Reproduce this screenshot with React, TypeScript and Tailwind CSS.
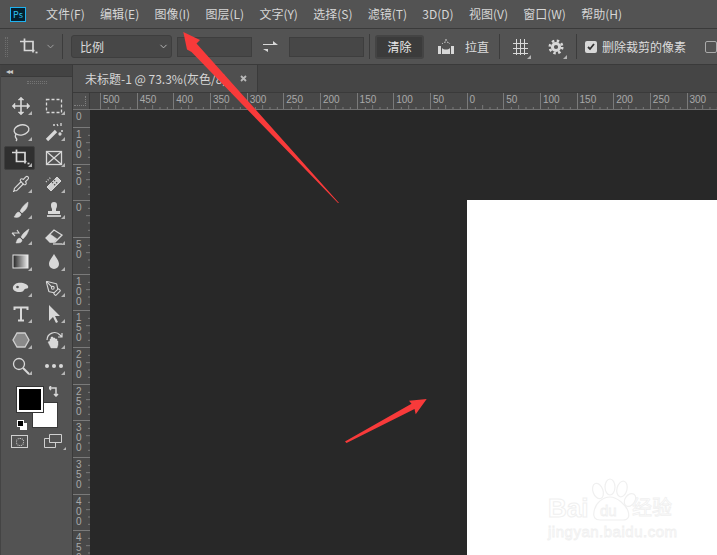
import { ReactNode } from "react";
import { ChevronDown, Pipette, PenTool } from "lucide-react";

const menus = ["文件(F)", "编辑(E)", "图像(I)", "图层(L)", "文字(Y)", "选择(S)", "滤镜(T)", "3D(D)", "视图(V)", "窗口(W)", "帮助(H)"];
const topLabels = [500, 450, 400, 350, 300, 250, 200, 150, 100, 50, 0, 50, 100, 150, 200, 250, 300];
const leftLabels = [100, 50, 0, 50, 100, 150, 200, 250, 300, 350, 400, 450];
const minor = [1, 2, 3, 4];

const Ic = ({ children }: { children: ReactNode }) => (
  <svg className="relative" width="20" height="20" viewBox="0 0 20 20" fill="none" stroke="#d8d8d8" strokeWidth="1.3">
    {children}
  </svg>
);

const CropIcon = () => (
  <Ic>
    <path d="M1 4.5h3M5.5 1.5v12h10M4 4.5h10v11" strokeWidth="1.7" />
    <path d="M16.5 15.5h2" strokeWidth="1.7" />
  </Ic>
);

const tools: { icon: ReactNode; active?: boolean }[] = [
  { icon: <Ic><path d="M10 3v14M3 10h14" strokeWidth="1.6" /><path d="M10 1l3 3H7zM10 19l3-3H7zM1 10l3 3V7zM19 10l-3 3V7z" fill="#d8d8d8" strokeWidth="0.4" /></Ic> },
  { icon: <Ic><rect x="2.5" y="3.5" width="15" height="13" strokeDasharray="3 2" /></Ic> },
  { icon: <Ic><ellipse cx="10.5" cy="8" rx="7.5" ry="5" transform="rotate(-12 10 8)" /><path d="M5 12c-1 2-1 3 0 4s1 2 0 3" /></Ic> },
  { icon: <Ic><path d="M3 18L12 9" strokeWidth="3.2" /><path d="M13 2l1 2M17 1v3M19 9h-2M9 3h2" strokeWidth="1.3" /><circle cx="16" cy="12" r="1" fill="#d8d8d8" /></Ic> },
  { icon: <CropIcon />, active: true },
  { icon: <Ic><rect x="2.5" y="3.5" width="15" height="13" /><path d="M3 4l14 12M17 4L3 16" /></Ic> },
  { icon: <Pipette className="relative" size={18} color="#d8d8d8" strokeWidth={1.5} /> },
  { icon: <Ic><path d="M3 13L13 3l4 4L7 17z" fill="#cfcfcf" strokeWidth="1" /><path d="M8 8l4 4M10 6l4 4" stroke="#535353" strokeDasharray="1.5 1.5" /><path d="M2 8l5-5" strokeDasharray="1 1.5" /></Ic> },
  { icon: <Ic><path d="M17 2c-3 2-6 5-8 9l2 2c4-3 6-6 6-11z" fill="#d8d8d8" strokeWidth="0.5" /><path d="M8 12c-3 0-3 3-5 5 3 1 7 0 7-3z" fill="#d8d8d8" strokeWidth="0.5" /></Ic> },
  { icon: <Ic><path d="M8 9c-1-2-1-3-1-4a3 3 0 016 0c0 1 0 2-1 4v2h4v3H4v-3h4z" fill="#d8d8d8" stroke="none" /><path d="M3 16h14" strokeWidth="1.7" /></Ic> },
  { icon: <Ic><path d="M18 3c-3 2-6 4-8 8l2 2c3-3 5-6 6-10z" fill="#d8d8d8" strokeWidth="0.5" /><path d="M9 12c-3 0-3 3-4 5 3 0 6 0 6-3z" fill="#d8d8d8" strokeWidth="0.5" /><path d="M1 7h7L6 4M1 7l3 3" strokeWidth="1.1" /></Ic> },
  { icon: <Ic><path d="M2 12l8-8 8 5-7 7H6z" /><path d="M6 8l7 5-3 3H6l-4-4z" fill="#d8d8d8" strokeWidth="0.5" /><path d="M9 18h9" /></Ic> },
  {
    icon: (
      <svg width="20" height="18" viewBox="0 0 20 18">
        <defs>
          <linearGradient id="grad" x1="0" x2="1" y1="0" y2="0">
            <stop offset="0" stopColor="#222" />
            <stop offset="1" stopColor="#eee" />
          </linearGradient>
        </defs>
        <rect x="2" y="2" width="15" height="13" fill="url(#grad)" stroke="#e6e6e6" />
      </svg>
    ),
  },
  { icon: <Ic><path d="M10 2c3 5 5 7 5 10a5 5 0 01-10 0c0-3 2-5 5-10z" fill="#d8d8d8" stroke="none" /></Ic> },
  { icon: <Ic><path d="M2 9c1-4 6-5 10-4 4 1 6 3 5 5-1 1-3 0-4 2-1 2-3 2-5 2-3 0-7-2-6-5z" fill="#d8d8d8" stroke="none" /><circle cx="6.5" cy="9" r="2" fill="#535353" /></Ic> },
  { icon: <PenTool size={17} color="#d8d8d8" strokeWidth={1.5} /> },
  { icon: <Ic><path d="M3.5 6V3.5h13V6M10 3.5v13M7 16.5h6" strokeWidth="2" /></Ic> },
  { icon: <Ic><path d="M5 1l11 11h-5l3 6-2 1-3-6-4 4z" fill="#d8d8d8" stroke="none" /></Ic> },
  { icon: <Ic><path d="M6 3h8l4 7-4 7H6l-4-7z" fill="#8a8a8a" stroke="#cfcfcf" /></Ic> },
  { icon: <Ic><path d="M3 10a7.5 7.5 0 0113-5l2 2M18 3v4h-4" strokeWidth="1.2" /><path d="M7 18l-3-6 2-1V9h1V7h2v1h2v1h2v2h1v4l-1 3z" fill="#d8d8d8" strokeWidth="0.4" /></Ic> },
  { icon: <Ic><circle cx="8" cy="8" r="5.5" /><path d="M12 12l6 6" strokeWidth="2" /></Ic> },
  { icon: <Ic><circle cx="3" cy="10" r="2" fill="#d8d8d8" stroke="none" /><circle cx="10" cy="10" r="2" fill="#d8d8d8" stroke="none" /><circle cx="17" cy="10" r="2" fill="#d8d8d8" stroke="none" /></Ic> },
];

const Sep = ({ className }: { className: string }) => <div className={`h-[25px] w-px bg-[#3c3c3c] ${className}`} />;

const Corner = ({ className }: { className: string }) => (
  <span className={`absolute h-0 w-0 border-b-[4px] border-l-[4px] border-b-[#b5b5b5] border-l-transparent ${className}`} />
);

function OptionsBar() {
  return (
    <div className="flex h-[36px] items-center overflow-hidden border-b border-[#3a3a3a] bg-[#535353] text-[12px] text-[#dcdcdc] [&>*]:shrink-0">
      <div className="ml-[5px] h-[20px] w-[3px] border-x border-dotted border-[#6e6e6e]" />
      <div className="ml-[11px] flex w-[20px] justify-center"><CropIcon /></div>
      <ChevronDown size={11} color="#a5a5a5" className="ml-[6px]" />
      <Sep className="ml-[6px]" />
      <div className="ml-[8px] flex h-[23px] w-[101px] items-center justify-between rounded-[3px] border border-[#3e3e3e] bg-[#474747] pl-[8px] pr-[2px]">
        <span>比例</span>
        <ChevronDown size={11} color="#bdbdbd" />
      </div>
      <div className="ml-[5px] h-[20px] w-[75px] border border-[#3e3e3e] bg-[#474747]" />
      <svg className="ml-[11px]" width="15" height="14" viewBox="0 0 15 14" fill="#d8d8d8">
        <path d="M0 4h10V1l5 4H0zM15 9H5v3L0 9h15z" />
      </svg>
      <div className="ml-[11px] h-[20px] w-[75px] border border-[#3e3e3e] bg-[#474747]" />
      <Sep className="ml-[5px]" />
      <div className="ml-[5px] flex h-[24px] w-[49px] items-center justify-center rounded-[3px] border-2 border-[#444] bg-[#3b3b3b] text-[#e8e8e8]">清除</div>
      <svg className="ml-[13px]" width="18" height="16" viewBox="0 0 18 16" fill="#d8d8d8">
        <path d="M1 7h3v8H1zM14 7h3v8h-3zM5 9c2 2 6 2 8 0v6H5z" />
        <path d="M5 5a5 5 0 018 0" fill="none" stroke="#d8d8d8" strokeDasharray="1.5 1.2" />
        <path d="M9 0v2" stroke="#d8d8d8" />
      </svg>
      <span className="ml-[10px] whitespace-nowrap">拉直</span>
      <Sep className="ml-[10px]" />
      <div className="relative ml-[12px] h-[18px] w-[18px]">
        <svg width="18" height="18" viewBox="0 0 18 18" fill="none" stroke="#d8d8d8">
          <path d="M1 5.5h15M1 10.5h15M1 15.5h15M4.5 1v16M8.5 1v16M12.5 1v16" />
        </svg>
        <Corner className="bottom-[-3px] right-[-1px]" />
      </div>
      <div className="relative ml-[18px] h-[16px] w-[16px]">
        <svg width="16" height="16" viewBox="0 0 16 16" fill="none" stroke="#d8d8d8">
          <circle cx="8" cy="8" r="6.2" strokeWidth="2.6" strokeDasharray="2.4 2.47" />
          <circle cx="8" cy="8" r="3.6" strokeWidth="3" />
        </svg>
        <Corner className="bottom-[-4px] right-[-3px]" />
      </div>
      <Sep className="ml-[12px]" />
      <div className="ml-[8px] flex h-[12px] w-[12px] items-center justify-center rounded-[2px] bg-[#d8d8d8]">
        <svg width="8" height="8" viewBox="0 0 8 8" fill="none" stroke="#333" strokeWidth="1.8">
          <path d="M1 4l2 2 4-5" />
        </svg>
      </div>
      <span className="ml-[5px] whitespace-nowrap">删除裁剪的像素</span>
      <div className="ml-[19px] h-[12px] w-[12px] rounded-[2px] border border-[#aaa]" />
    </div>
  );
}

function Toolbox() {
  return (
    <div className="flex w-[73px] shrink-0 flex-col border-x border-l-[#444] border-r-[#3a3a3a] bg-[#535353]">
      <div className="flex h-[12px] items-center border-b border-[#3a3a3a] bg-[#434343] pl-[5px] text-[8px] leading-none tracking-[-1px] text-[#c8c8c8]">◂◂</div>
      <div className="mx-auto mt-[4px] h-[3px] w-[20px] border-y border-dotted border-[#747474]" />
      <div className="mt-[9px] grid grid-cols-[33px_33px] pl-[3px]">
        {tools.map((t, i) => (
          <div key={i} className="relative flex h-[26px] items-center justify-center">
            {t.active && <span className="absolute inset-y-[1px] left-0 right-[2px] rounded-[2px] border border-[#3f3f3f] bg-[#2f2f2f]" />}
            {t.icon}
            <Corner className="bottom-[4px] right-[5px]" />
          </div>
        ))}
      </div>
      <div className="relative mt-[8px] h-[48px] w-full">
        <div className="absolute left-[31px] top-[15px] h-[26px] w-[26px] border border-[#3a3a3a] bg-white" />
        <div className="absolute left-[16px] top-0 h-[25px] w-[26px] border-2 border-white bg-black outline outline-1 outline-[#333]" />
        <svg className="absolute left-[48px] top-[-1px]" width="11" height="11" viewBox="0 0 11 11" fill="none" stroke="#d8d8d8" strokeWidth="1.5">
          <path d="M0 2h7v8M2 0L0 2l2 2M5 8l2 2 2-2" />
        </svg>
        <div className="absolute left-[19px] top-[36px] h-[7px] w-[7px] bg-white" />
        <div className="absolute left-[16px] top-[33px] h-[7px] w-[7px] border border-white bg-black" />
      </div>
      <div className="flex items-start pl-[10px]">
        <div className="flex h-[13px] w-[17px] items-center justify-center border border-[#d0d0d0]">
          <div className="h-[8px] w-[8px] rounded-full border border-dotted border-[#e0e0e0]" />
        </div>
        <svg className="ml-[16px] mt-[-1px]" width="18" height="14" viewBox="0 0 18 14" fill="none" stroke="#d0d0d0">
          <path d="M.5 4.5h11v9H.5z" />
          <path d="M5.5.5h12v8h-12z" fill="#535353" />
        </svg>
        <span className="ml-[1px] mt-[12px] h-0 w-0 border-b-[3px] border-l-[3px] border-b-[#b5b5b5] border-l-transparent" />
      </div>
    </div>
  );
}

function TopRuler() {
  return (
    <div className="flex h-[17px] shrink-0 overflow-hidden border-b border-[#717171] bg-[#484848] font-['Liberation_Sans',sans-serif]">
      <div className="flex h-full w-[17px] shrink-0 items-end justify-end border-r border-[#3a3a3a] bg-[#4f4f4f]">
        <div className="mb-[3px] mr-[3px] h-[10px] w-[12px] border-b border-r border-dotted border-[#808080]" />
      </div>
      <div className="w-[10px] shrink-0" />
      {topLabels.map((n, i) => (
        <div key={i} className="relative h-full w-[36.67px] shrink-0 border-l border-[#7a7a7a] pl-[2px] text-[10px] leading-[13px] text-[#a9a9a9]">
          {n}
          <svg className="absolute bottom-0 left-0" width="37" height="4" fill="none" stroke="#7a7a7a">
            {minor.map((m) => (
              <path key={m} d={`M${m * 7.33} ${m === 2 ? 0 : 2}V4`} />
            ))}
          </svg>
        </div>
      ))}
    </div>
  );
}

function LeftRuler() {
  return (
    <div className="flex w-[17px] shrink-0 flex-col overflow-hidden bg-[#484848] font-['Liberation_Sans',sans-serif] text-[10px] leading-[10px] text-[#a9a9a9]">
      <div className="h-[17px] shrink-0 pl-[3px] pt-[2px]">0</div>
      {leftLabels.map((n, i) => (
        <div key={i} className="relative h-[36.67px] w-full shrink-0 border-t border-[#7a7a7a] pl-[3px] pt-[2px]">
          {String(n).split("").map((d, j) => (
            <div key={j}>{d}</div>
          ))}
          <svg className="absolute right-0 top-0" width="4" height="37" fill="none" stroke="#7a7a7a">
            {minor.map((m) => (
              <path key={m} d={`M${m === 2 ? 0 : 2} ${m * 7.33}H4`} />
            ))}
          </svg>
        </div>
      ))}
    </div>
  );
}

// baidu jingyan mark, very faint on the white document
function Watermark() {
  return (
    <svg className="absolute left-[540px] top-[470px]" width="150" height="80" viewBox="0 0 150 80" fill="#fff" stroke="#f0f0f0">
      <text x="8" y="47" fontFamily="Liberation Sans, sans-serif" fontSize="26" fontWeight="700" strokeWidth="1">Bai</text>
      <g strokeWidth="1.2">
        <ellipse cx="58" cy="21" rx="5" ry="8" transform="rotate(-20 58 21)" />
        <ellipse cx="70" cy="17" rx="5" ry="8" />
        <ellipse cx="82" cy="19" rx="5" ry="8" transform="rotate(15 82 19)" />
        <ellipse cx="90" cy="30" rx="5" ry="7" transform="rotate(35 90 30)" />
        <path d="M54 42c1-9 9-15 16-15s16 8 18 14c2 6 0 9-5 9H60c-5 0-7-3-6-8z" />
      </g>
      <text x="60" y="46" fontFamily="Liberation Sans, sans-serif" fontSize="15" strokeWidth="0.8">du</text>
      <text x="92" y="45" fontFamily="Noto Sans CJK SC, sans-serif" fontSize="20" strokeWidth="0.8">经验</text>
      <text x="8" y="67" fontFamily="Liberation Sans, sans-serif" fontSize="15" textLength="129" strokeWidth="0.8">jingyan.baidu.com</text>
    </svg>
  );
}

export default function App() {
  return (
    <div className="relative flex h-[555px] w-[717px] flex-col overflow-hidden bg-[#535353] font-['Noto_Sans_CJK_SC','Liberation_Sans',sans-serif]">
      <div className="flex h-[29px] shrink-0 items-center border-b border-[#3a3a3a] text-[12px] text-[#d6d6d6]">
        <div className="ml-[10px] flex h-[15px] w-[16px] items-center justify-center border border-[#1fb2f0] bg-[#04202f] text-[9px] leading-none text-[#31c5f4]">Ps</div>
        <div className="ml-[20px] flex gap-[15.3px] whitespace-nowrap">
          {menus.map((m) => (
            <span key={m}>{m}</span>
          ))}
        </div>
      </div>
      <OptionsBar />
      <div className="flex min-h-0 flex-1">
        <Toolbox />
        <div className="flex min-w-0 flex-1 flex-col">
          <div className="flex h-[28px] shrink-0 border-b border-[#3a3a3a] bg-[#454545]">
            <div className="flex w-[185px] items-center border-r border-[#3a3a3a] bg-[#4f4f4f] pl-[12px] text-[12px] text-[#d6d6d6]">
              <span className="whitespace-nowrap">未标题-1 @ 73.3%(灰色/8)</span>
              <svg className="ml-auto mr-[10px]" width="7" height="7" viewBox="0 0 7 7" stroke="#b8b8b8" strokeWidth="1.8">
                <path d="M1 1l5 5M6 1L1 6" />
              </svg>
            </div>
          </div>
          <TopRuler />
          <div className="flex min-h-0 flex-1">
            <LeftRuler />
            <div className="flex min-w-0 flex-1 bg-[#282828] pl-[377px] pt-[90px]">
              <div className="flex-1 bg-white" />
            </div>
          </div>
        </div>
      </div>
      <Watermark />
      <svg className="pointer-events-none absolute left-0 top-0" width="717" height="555" fill="#f83a3a">
        <polygon points="183.3,32 200,40 196.5,43.5 339,203 338,203 191.5,52 187,49.5" />
        <polygon points="426.7,399 409,400.7 411.5,403.7 345,441.5 346.5,443 414.5,409 415.7,414.3" />
      </svg>
    </div>
  );
}
